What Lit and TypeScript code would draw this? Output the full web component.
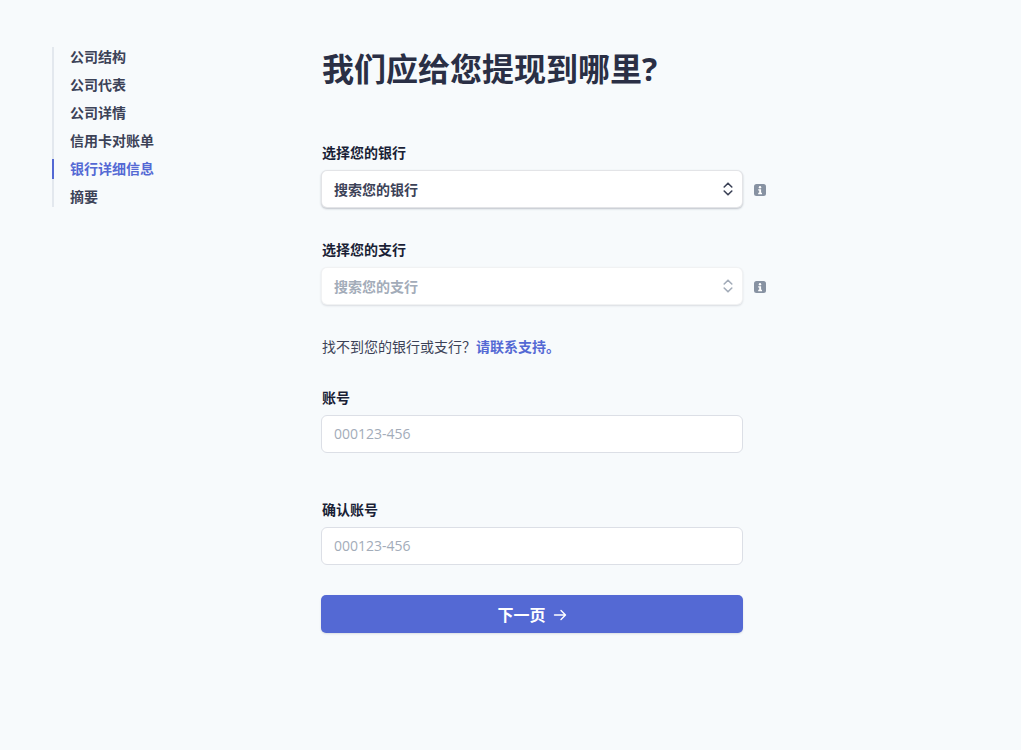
import { LitElement, html, css } from "lit";
import { customElement } from "lit/decorators.js";

const chevrons = html`<svg class="chev" viewBox="0 0 10 14" width="10" height="14" fill="none" stroke="currentColor" stroke-width="1.6" stroke-linecap="round" stroke-linejoin="round"><path d="M1.2 5L5 1.2 8.8 5"/><path d="M1.2 9L5 12.8 8.8 9"/></svg>`;
const info = html`<svg class="info" viewBox="0 0 12 12" width="12" height="12"><rect width="12" height="12" rx="2.5" fill="#8792a2"/><circle cx="6" cy="3.2" r="1.2" fill="#fff"/><path d="M4.2 5.2h2.9v3.6h.9v1.4H4.2V8.8h1V6.5h-1z" fill="#fff"/></svg>`;

@customElement("app-root")
export class AppRoot extends LitElement {
  static styles = css`
    :host {
      display: block;
      min-height: 750px;
      background: #f7fafc;
      font-family: "Open Sans", "Noto Sans CJK SC", sans-serif;
      color: #30313d;
      box-sizing: border-box;
    }
    .page {
      display: flex;
      align-items: flex-start;
      padding: 47px 0 0 52px;
    }
    nav {
      width: 269px;
      flex: none;
      display: flex;
      flex-direction: column;
    }
    .nav-item {
      border-left: 2px solid #e3e8ee;
      padding: 0 0 8px 16px;
      font-size: 14px;
      line-height: 20px;
      font-weight: 600;
      color: #3c4257;
    }
    .nav-item:last-child { padding-bottom: 0; }
    .nav-item.active {
      color: #5469d4;
      border-left-color: transparent;
      background-image:
        linear-gradient(#5469d4, #5469d4),
        linear-gradient(#e3e8ee, #e3e8ee);
      background-position: 0 0, 0 20px;
      background-size: 2px 20px, 2px 8px;
      background-repeat: no-repeat;
      background-origin: border-box;
      background-clip: border-box;
    }
    main {
      width: 460px;
      display: flex;
      flex-direction: column;
    }
    h1 {
      margin: 0;
      padding-left: 1px;
      font-size: 32px;
      line-height: 44px;
      font-weight: 700;
      color: #2a2f45;
    }
    .field { display: flex; flex-direction: column; }
    label {
      padding-left: 1px;
      font-size: 14px;
      line-height: 20px;
      font-weight: 600;
      color: #1a1f36;
      margin-bottom: 7px;
    }
    .row { display: flex; align-items: center; gap: 11px; }
    .info { margin-top: 2px; }
    .box {
      width: 422px;
      height: 38px;
      box-sizing: border-box;
      flex: none;
      display: flex;
      align-items: center;
      justify-content: space-between;
      padding: 0 10px 0 13px;
      background: #fff;
      border-radius: 6px;
      font-size: 14px;
    }
    .select {
      box-shadow: inset 0 0 0 1px rgba(60,66,87,.14), 0 1px 2px rgba(60,66,87,.3);
      font-weight: 600;
      color: #3c4257;
    }
    .select .chev { color: #3c4257; }
    .select.off {
      box-shadow: inset 0 0 0 1px rgba(60,66,87,.07), 0 1px 2px rgba(60,66,87,.16);
      color: #a3acb9;
    }
    .select.off .chev { color: #a3acb9; }
    .input {
      border: 1px solid #dcdfe6;
      padding: 0 10px 2px 12px;
      color: #a3acb9;
      font-weight: 400;
    }
    .help {
      margin: 32px 0 0;
      padding-left: 1px;
      font-size: 14px;
      line-height: 20px;
      font-weight: 400;
      color: #3c4257;
    }
    .help a { color: #5469d4; font-weight: 600; text-decoration: none; }
    .next {
      width: 422px;
      height: 38px;
      margin-top: 30px;
      border: 0;
      border-radius: 5px;
      background: #5469d4;
      color: #fff;
      font: 600 16px "Open Sans", "Noto Sans CJK SC", sans-serif;
      display: flex;
      align-items: center;
      justify-content: center;
      gap: 7px;
      padding: 0;
      box-shadow: 0 1px 2px rgba(60,66,87,.15);
    }
    .next svg { margin-top: 1px; }
    .f1 { margin-top: 52px; }
    .f2 { margin-top: 32px; }
    .f3 { margin-top: 31px; }
    .f4 { margin-top: 47px; }
  `;

  render() {
    const nav = ["公司结构", "公司代表", "公司详情", "信用卡对账单", "银行详细信息", "摘要"];
    return html`<div class="page">
      <nav>
        ${nav.map((n, i) => html`<div class="nav-item ${i === 4 ? "active" : ""}">${n}</div>`)}
      </nav>
      <main>
        <h1>我们应给您提现到哪里?</h1>
        <div class="field f1">
          <label>选择您的银行</label>
          <div class="row"><div class="box select"><span>搜索您的银行</span>${chevrons}</div>${info}</div>
        </div>
        <div class="field f2">
          <label>选择您的支行</label>
          <div class="row"><div class="box select off"><span>搜索您的支行</span>${chevrons}</div>${info}</div>
        </div>
        <p class="help">找不到您的银行或支行？<a href="#">请联系支持。</a></p>
        <div class="field f3">
          <label>账号</label>
          <div class="box input">000123-456</div>
        </div>
        <div class="field f4">
          <label>确认账号</label>
          <div class="box input">000123-456</div>
        </div>
        <button class="next">下一页 <svg viewBox="0 0 14 14" width="14" height="14" fill="none" stroke="currentColor" stroke-width="1.4" stroke-linecap="round" stroke-linejoin="round"><path d="M1.5 7h11M8 2.5L12.5 7 8 11.5"/></svg></button>
      </main>
    </div>`;
  }
}
